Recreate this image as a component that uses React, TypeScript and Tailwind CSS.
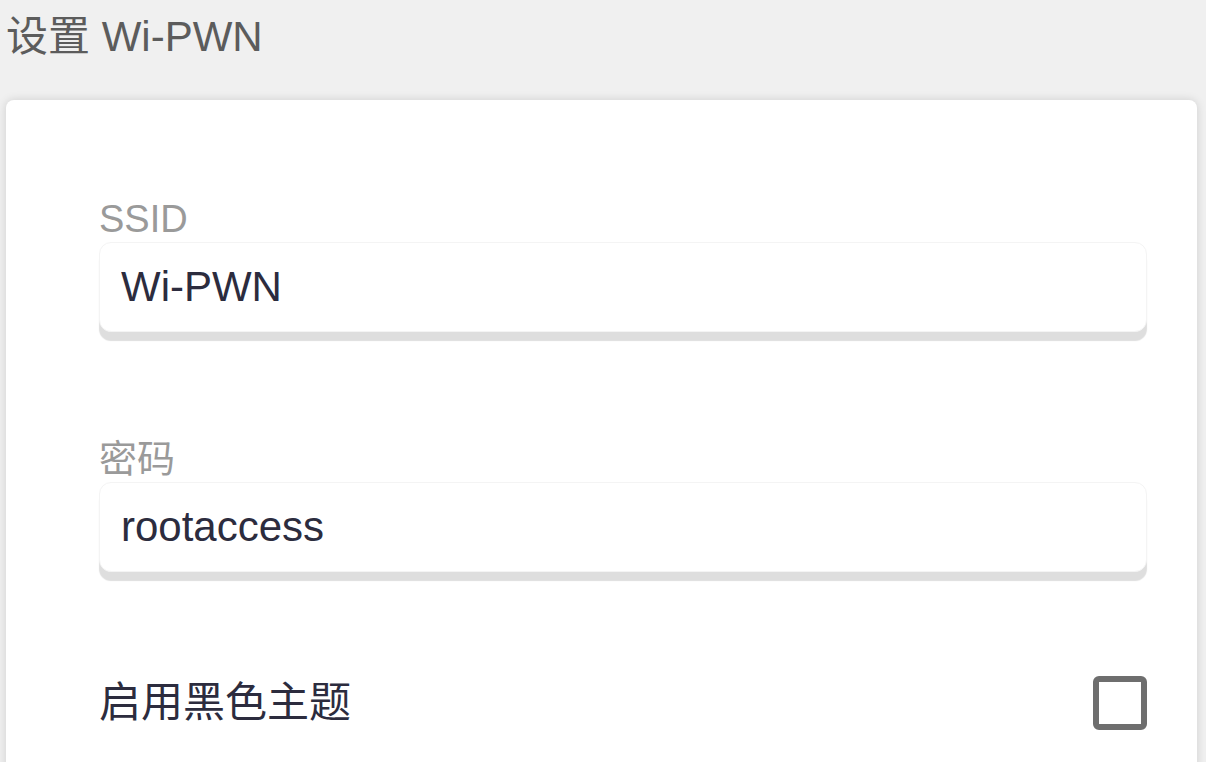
const fields = [
    { label: "SSID", value: "Wi-PWN" },
    { label: "密码", value: "rootaccess" },
];

const font = "font-['Liberation_Sans','Noto_Sans_CJK_SC',sans-serif]";

const App = () => {
    return (
        <main className={`min-h-screen bg-[#f0f0f0] ${font}`}>
            {/* Page title */}
            <h1 className="pl-[6px] pt-[16px] text-[42px] leading-[42px] text-[#5c5c5c]">
                设置 Wi-PWN
            </h1>

            {/* Settings card */}
            <section className="mt-[42px] ml-[6px] mr-[9px] rounded-[8px] bg-white pl-[93px] pr-[50px] pt-[100px] pb-[60px] shadow-[0_0_10px_rgba(0,0,0,0.14)]">
                <div className="flex flex-col gap-[108px]">
                    {fields.map((field) => (
                        <label key={field.label} className="flex flex-col gap-[4px]">
                            <span className="text-[38px] leading-[38px] text-[#9a9a9a]">
                                {field.label}
                            </span>
                            <input
                                readOnly
                                defaultValue={field.value}
                                className={`h-[90px] w-full rounded-[12px] border border-[#f4f4f4] bg-white px-[21px] text-[42px] text-[#2c2c3e] outline-none shadow-[0_9px_1px_#dedede] ${font}`}
                            />
                        </label>
                    ))}
                </div>

                {/* Dark theme toggle */}
                <div className="mt-[104px] flex items-center justify-between">
                    <span className="text-[42px] leading-[54px] text-[#2c2c3e]">
                        启用黑色主题
                    </span>
                    <span className="h-[54px] w-[54px] rounded-[6px] border-[6px] border-[#6e6e6e] bg-white" />
                </div>
            </section>
        </main>
    );
};

export default App;
